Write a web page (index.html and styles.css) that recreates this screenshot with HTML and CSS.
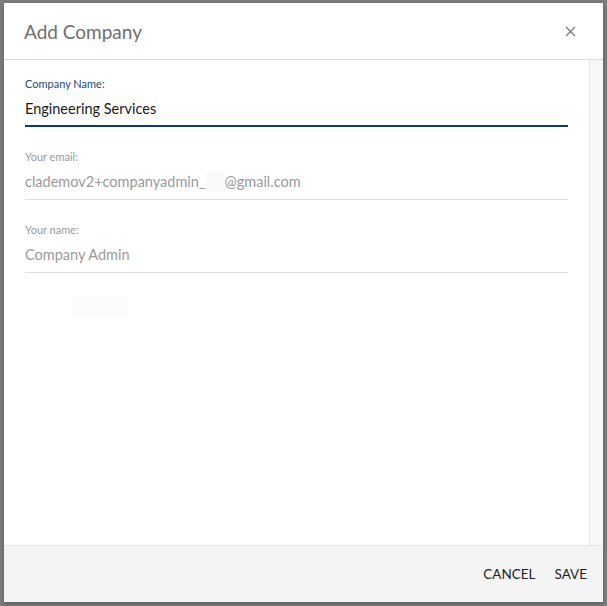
FILE: index.html
```html
<!DOCTYPE html>
<html lang="en">
<head>
    <meta charset="UTF-8">
    <meta name="viewport" content="width=device-width, initial-scale=1.0">
    <title>Add Company</title>
    <link rel="stylesheet" href="styles.css">
</head>
<body>
    <div class="dialog">
        <div class="dialog-header">
            <h2>Add Company</h2>
            <button class="close" aria-label="Close">
                <svg width="11" height="11" viewBox="0 0 11 11"><path d="M1 1L10 10M10 1L1 10" stroke="#7a7a7a" stroke-width="1.3" fill="none"/></svg>
            </button>
        </div>
        <div class="dialog-body">
            <div class="content">
                <div class="field active">
                    <label>Company Name:</label>
                    <div class="value">Engineering Services</div>
                </div>
                <div class="field disabled">
                    <label>Your email:</label>
                    <div class="value">clademov2+companyadmin_<span class="gap"></span>@gmail.com</div>
                </div>
                <div class="field disabled">
                    <label>Your name:</label>
                    <div class="value">Company Admin</div>
                </div>
                <div class="ghost"></div>
            </div>
            <div class="scrollbar"></div>
        </div>
        <div class="dialog-footer">
            <button class="action">CANCEL</button>
            <button class="action">SAVE</button>
        </div>
    </div>
</body>
</html>
```

FILE: styles.css
```css
html, body {
    margin: 0;
    height: 100%;
}

body {
    background-color: #7c7c7c;
    font-family: Lato, "Open Sans", sans-serif;
    padding: 3px 4px 4px 4px;
    box-sizing: border-box;
}

.dialog {
    background-color: #ffffff;
    width: 599px;
    height: 599px;
    display: flex;
    flex-direction: column;
    box-shadow: 0 2px 4px rgba(0, 0, 0, 0.25);
}

.dialog-header {
    height: 56px;
    border-bottom: 1px solid #dcdcdc;
    display: flex;
    align-items: center;
    justify-content: space-between;
    padding: 0 27px 0 20px;
    flex-shrink: 0;
}

.dialog-header h2 {
    margin: 0;
    font-size: 19px;
    font-weight: 400;
    color: #6f6f6f;
}

.close {
    background: none;
    border: none;
    padding: 0;
    width: 12px;
    height: 12px;
    display: flex;
    align-items: center;
    justify-content: center;
    cursor: pointer;
}

.dialog-body {
    flex: 1;
    display: flex;
}

.content {
    flex: 1;
    padding: 17px 21px 0 21px;
}

.scrollbar {
    width: 13px;
    background-color: #f7f7f7;
    border-left: 1px solid #e6e6e6;
}

.field {
    margin-bottom: 23px;
}

.field label {
    display: block;
    font-size: 11px;
    line-height: 14px;
    margin-bottom: 8px;
}

.field .value {
    font-size: 14.5px;
    line-height: 20px;
    padding-bottom: 7px;
    border-bottom: 1px solid #dedede;
}

.field.active label {
    color: #1e4b75;
}

.field.active .value {
    color: #1a1a1a;
    border-bottom: 2px solid #0f3a63;
    padding-bottom: 6px;
}

.field.disabled label {
    color: #9a9a9a;
}

.field.disabled .value {
    color: #9a9a9a;
}

.gap {
    display: inline-block;
    width: 19px;
    height: 20px;
    vertical-align: top;
    background-color: #fafafa;
}

.ghost {
    width: 56px;
    height: 22px;
    margin: 1px 0 0 47px;
    background-color: #fbfbfb;
}

.dialog-footer {
    height: 56px;
    background-color: #f4f4f4;
    border-top: 1px solid #e6e6e6;
    display: flex;
    align-items: center;
    justify-content: flex-end;
    padding-right: 16px;
    gap: 19px;
    flex-shrink: 0;
}

.action {
    background: none;
    border: none;
    padding: 0;
    font-family: Lato, "Open Sans", sans-serif;
    font-size: 13.5px;
    color: #1e1e1e;
    cursor: pointer;
}
```
